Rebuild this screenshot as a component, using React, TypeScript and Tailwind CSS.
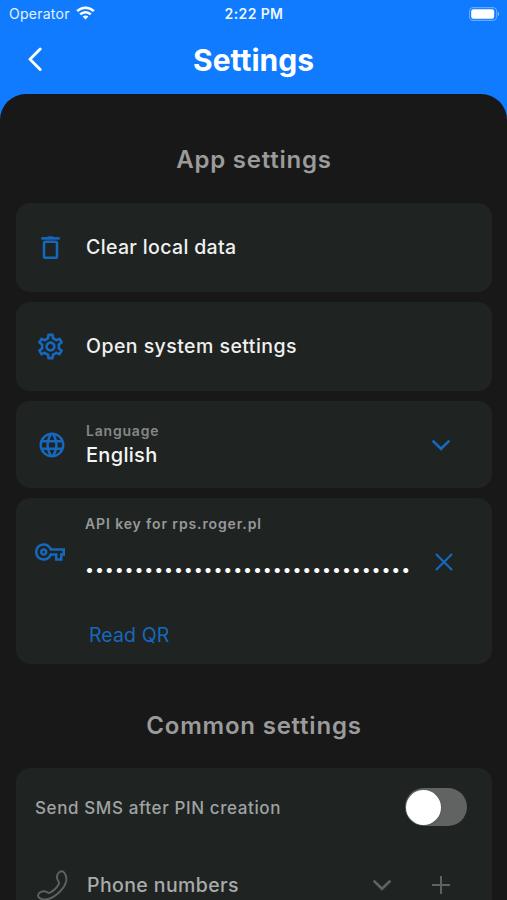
import type { ReactNode } from "react";
import { MdLanguage, MdOutlineSettings, MdOutlineVpnKey } from "react-icons/md";

const API_KEY_LENGTH = 33;

function StatusBar() {
  return (
    <div className="grid grid-cols-3 items-center h-[27px] pl-[9px] pr-[8px]">
      <div className="flex items-center gap-[6px]">
        <span className="text-[14px] tracking-[0.25px] text-white/90">Operator</span>
        <svg className="w-[19px] h-[14px] -mt-px" viewBox="0 0 19 14" fill="none" stroke="white" strokeWidth="2.5">
          <path d="M1.2 5.2C5.8 .6 13.2 .6 17.8 5.2" />
          <path d="M4.2 8.4C7.2 5.5 11.8 5.5 14.8 8.4" />
          <path d="M6.6 10.6C8.3 9.1 10.7 9.1 12.4 10.6L9.5 13.6Z" fill="white" stroke="none" />
        </svg>
      </div>
      <span className="text-center text-[14px] font-semibold tracking-[0.4px] text-white/95">2:22 PM</span>
      <svg className="w-[31px] h-[14px] -mr-px justify-self-end" viewBox="0 0 31 14">
        <rect x="0.6" y="0.6" width="27" height="12.8" rx="3.8" fill="none" stroke="white" strokeOpacity="0.35" strokeWidth="1.1" />
        <rect x="2.2" y="2.2" width="23" height="9.6" rx="2.2" fill="white" />
        <path d="M28.8 4.8c1.8.6 1.8 3.8 0 4.4z" fill="white" fillOpacity="0.45" />
      </svg>
    </div>
  );
}

function Header() {
  return (
    <div className="relative flex items-center justify-center h-[67px]">
      <button className="absolute left-[27px] top-[20px]">
        <svg className="w-4 h-6" viewBox="0 0 16 24" fill="none" stroke="white" strokeWidth="2.8" strokeLinecap="round" strokeLinejoin="round">
          <path d="M13.2 2L3 12.3L13.2 22.6" />
        </svg>
      </button>
      <h1 className="-mt-px text-[30px] leading-9 font-bold text-white">Settings</h1>
    </div>
  );
}

function SectionTitle({ children }: { children: ReactNode }) {
  return <h2 className="text-center text-[24px] leading-8 font-semibold tracking-[0.78px] text-[#9b9b9b]">{children}</h2>;
}

function Chevron({ className }: { className: string }) {
  return (
    <svg className={className} viewBox="0 0 20 12" fill="none" stroke="currentColor" strokeWidth="2.7">
      <path d="M1.6 1.6L10 9.8L18.4 1.6" />
    </svg>
  );
}

function TrashIcon() {
  return (
    <svg className="w-[31px] h-[31px] text-[#1668bd]" viewBox="0 0 31 31" fill="none" stroke="currentColor" strokeWidth="2.6">
      <path d="M6.300 6.400H24.700" />
      <path d="M11 5.800C12 3.600 19 3.600 20 5.800Z" fill="currentColor" stroke="none" />
      <rect x="9" y="9.800" width="13" height="16" rx="1.500" />
    </svg>
  );
}

export default function App() {
  return (
    <div className="w-full h-[900px] overflow-hidden bg-[#107bfe] font-['Inter',sans-serif]">
      <StatusBar />
      <Header />

      <div className="h-[806px] rounded-t-[26px] bg-[#181818] pl-4 pr-[15px] pt-[50px]">
        <SectionTitle>App settings</SectionTitle>

        <div className="mt-[27px] space-y-[10px]">
          <div className="flex items-center h-[89px] rounded-[14px] bg-[#1f2322] pl-[19px]">
            <TrashIcon />
            <span className="ml-5 text-[19.5px] font-medium tracking-[0.35px] text-[#f0f0f0]">Clear local data</span>
          </div>

          <div className="flex items-center h-[89px] rounded-[14px] bg-[#1f2322] pl-[19px]">
            <MdOutlineSettings className="w-[31px] h-[31px] text-[#1668bd]" />
            <span className="ml-5 text-[19.5px] font-medium tracking-[0.45px] text-[#f0f0f0]">Open system settings</span>
          </div>

          <div className="flex items-center h-[87px] rounded-[14px] bg-[#1f2322] pl-[21px] pr-[41px]">
            <MdLanguage className="w-[30px] h-[30px] text-[#1668bd]" />
            <div className="ml-[19px] flex-1">
              <div className="text-[14px] leading-[18px] font-semibold tracking-[0.8px] text-[#858787]">Language</div>
              <div className="mt-[2px] text-[20px] leading-[26px] font-medium tracking-[0.3px] text-[#f5f5f5]">English</div>
            </div>
            <Chevron className="w-5 h-3 text-[#1668bd]" />
          </div>

          {/* API key */}
          <div className="h-[166px] rounded-[14px] bg-[#1f2322] pl-[19px] pr-[39px] pt-[17px]">
            <div className="flex">
              <MdOutlineVpnKey className="w-[30px] h-[30px] mt-[22px] mr-px text-[#1668bd]" />
              <div className="ml-[19px] flex-1">
                <div className="text-[14px] leading-[18px] font-semibold tracking-[0.88px] text-[#979999]">API key for rps.roger.pl</div>
                <div className="mt-[14px] mb-px text-[16px] leading-[44px] tracking-[0.88px] whitespace-nowrap text-white">
                  {"•".repeat(API_KEY_LENGTH)}
                </div>
              </div>
              <svg className="w-[18px] h-[18px] mt-[38px] text-[#1668bd]" viewBox="0 0 18 18" fill="none" stroke="currentColor" strokeWidth="2.2">
                <path d="M1 1L17 17M17 1L1 17" />
              </svg>
            </div>
            <button className="block ml-[54px] mt-[31px] text-[19.5px] leading-6 tracking-[0.1px] text-[#1668bd]">Read QR</button>
          </div>
        </div>

        <div className="mt-[46px]">
          <SectionTitle>Common settings</SectionTitle>
        </div>

        <div className="mt-[26px] h-[160px] rounded-t-[14px] bg-[#1f2322] px-5 pt-5">
          <div className="flex items-center justify-between pr-[5px]">
            <span className="-ml-px mt-[3px] text-[17px] font-medium tracking-[0.6px] text-[#a0a2a2]">Send SMS after PIN creation</span>
            <div className="flex items-center w-[62px] h-[38px] rounded-full bg-[#616363] pl-[1px]">
              <div className="size-[35px] rounded-full bg-white shadow" />
            </div>
          </div>

          <div className="flex items-center h-[38px] mt-10 pr-[22px]">
            <svg className="w-8 h-8 mt-[2px] text-[#5f6262]" viewBox="0 0 32 32" fill="none" stroke="currentColor" strokeWidth="1.9" strokeLinejoin="round">
              <path d="M23.500 2C25 .9 27 1 28.500 3C32 8 30.500 15 24.500 21C18 27.500 12 30.500 6.500 29.300C3.500 28.600 1.500 26.800 2.200 24.800C3 22.300 6.500 20.800 9.500 21.500C12 22.100 12 23.800 14 22.700C17.500 20.800 21 17.500 22.800 14C23.900 11.900 21.800 11.500 21.200 8.800C20.600 6 21.800 3.300 23.500 2Z" />
            </svg>
            <span className="ml-[19px] mt-[2px] flex-1 text-[19.5px] font-medium tracking-[0.4px] text-[#a9abab]">Phone numbers</span>
            <Chevron className="w-5 h-3 text-[#5f6262]" />
            <svg className="w-[18px] h-[18px] ml-[40px] text-[#5f6262]" viewBox="0 0 18 18" fill="none" stroke="currentColor" strokeWidth="2">
              <path d="M9 0V18M0 9H18" />
            </svg>
          </div>
        </div>
      </div>
    </div>
  );
}
